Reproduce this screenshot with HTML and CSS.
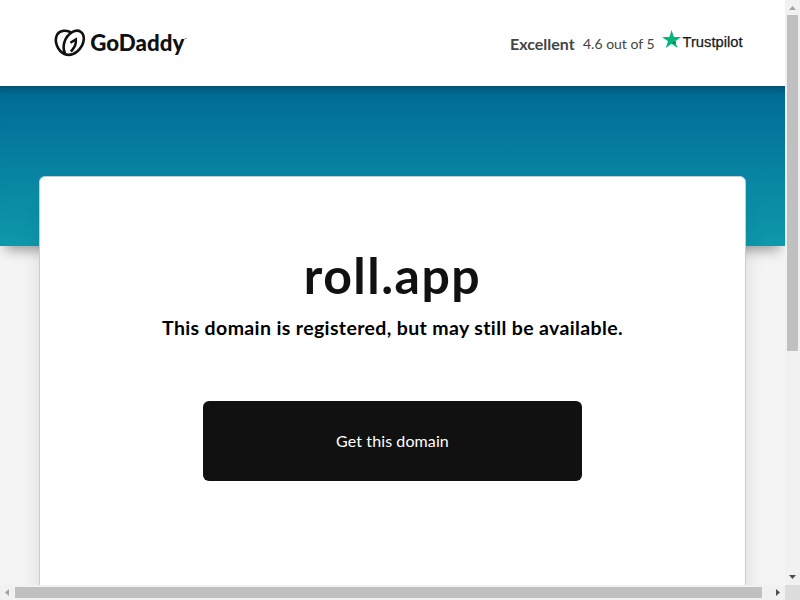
FILE: index.html
```html
<!DOCTYPE html>
<html lang="en">
<head>
  <meta charset="UTF-8">
  <meta name="viewport" content="width=device-width, initial-scale=1.0">
  <title>roll.app</title>
  <link rel="stylesheet" href="styles.css">
</head>
<body>

<div class="window">
  <div class="page">
    <header class="header">
      <svg class="logo" width="136" height="32" viewBox="0 0 136 32">
        <g fill="none" stroke="#111" stroke-width="2.6">
          <path d="M17.4 4.8C13.2 1.7 6.1 1.9 3.2 6.5C-.4 13.2 3.6 22.8 10.4 26C19.2 29.7 29.2 20.4 29.8 11.2C30 3.8 24.5.6 18.1 4.2C10.4 9.1 7.6 18.4 11.2 26"/>
          <path d="M16.4 14.8L21.8 11.4V14.4C21.6 17.4 19.8 20.4 16.9 23.6" stroke-width="2.5"/>
        </g>
        <text class="logo-text" x="36.3" y="23" textLength="94" lengthAdjust="spacingAndGlyphs">GoDaddy</text>
        <text class="logo-tm" x="130.4" y="11.6">™</text>
      </svg>
      <div class="rating">
        <span class="rating-word">Excellent</span>
        <span class="rating-score">4.6 out of 5</span>
        <svg class="trustpilot" width="82" height="24" viewBox="0 0 82 24">
          <path fill="#00b67a" d="M9.6 2L11.9 8.9H19.2L13.3 13.2L15.5 20.1L9.6 15.8L3.8 20.1L6 13.2L.1 8.9H7.4Z"/>
          <path fill="#005128" d="M13.8 14.7L13.3 13.2L9.6 15.8Z"/>
          <text class="trustpilot-text" x="20.5" y="19" textLength="60" lengthAdjust="spacingAndGlyphs">Trustpilot</text>
        </svg>
      </div>
    </header>

    <div class="banner"></div>

    <main class="card">
      <h1>roll.app</h1>
      <h2>This domain is registered, but may still be available.</h2>
      <a class="get-btn" href="#">Get this domain</a>
    </main>
  </div>

  <div class="scroll-y">
    <svg width="15" height="15"><path fill="#a3a3a3" d="M4 10L7.5 6L11 10Z"/></svg>
    <div class="thumb-y"></div>
    <svg class="arrow-end" width="15" height="15"><path fill="#505050" d="M4 5L7.5 9L11 5Z"/></svg>
  </div>
  <div class="scroll-x">
    <svg width="15" height="15"><path fill="#a3a3a3" d="M9 4L5 7.5L9 11Z"/></svg>
    <div class="thumb-x"></div>
    <svg class="arrow-end" width="15" height="15"><path fill="#505050" d="M6 4L10 7.5L6 11Z"/></svg>
  </div>
  <div class="corner"></div>
</div>

</body>
</html>
```

FILE: styles.css
```css
body {
  margin: 0;
  font-family: Lato, sans-serif;
  color: #111;
  overflow: hidden;
}
.window {
  display: grid;
  grid-template-columns: 785px 15px;
  grid-template-rows: 585px 15px;
  width: 800px;
  height: 600px;
}
.page {
  overflow: hidden;
  background: #f4f4f4;
}
.header {
  display: flex;
  justify-content: space-between;
  box-sizing: border-box;
  height: 86px;
  padding: 28px 41px 0 54px;
  background: #fff;
}
.logo-text {
  font-size: 22.5px;
  font-weight: 900;
  fill: #111;
}
.logo-tm {
  font-size: 3px;
  fill: #111;
}
.rating {
  display: flex;
  height: 24px;
  line-height: 31px;
  color: #444;
  white-space: nowrap;
}
.rating-word {
  width: 73px;
  font-size: 16px;
  font-weight: bold;
}
.rating-score {
  width: 79px;
  font-size: 14px;
}
.trustpilot-text {
  font-family: "Liberation Sans", sans-serif;
  font-size: 14px;
  fill: #191919;
  stroke: #191919;
  stroke-width: 0.25px;
}
.banner {
  height: 160px;
  background: linear-gradient(#006a96, #0f98ab);
  box-shadow: inset 0 11px 9px -8px rgba(0,0,0,0.3), 0 10px 12px -6px rgba(0,0,0,0.38);
}
.card {
  display: flex;
  flex-direction: column;
  align-items: center;
  box-sizing: border-box;
  width: 707px;
  height: 700px;
  margin: -70px 0 0 39px;
  padding-top: 68px;
  background: #fff;
  border: 1px solid #c8cccc;
  border-radius: 6px;
  box-shadow: 0 30px 24px -8px rgba(0,0,0,0.2);
}
h1 {
  margin: 0;
  font-size: 50px;
  line-height: 60px;
  letter-spacing: 1.5px;
}
h2 {
  margin: 11px 0 0;
  font-size: 19.5px;
  line-height: 24px;
  letter-spacing: 0.37px;
  color: #000;
}
.get-btn {
  width: 379px;
  height: 80px;
  margin-top: 61px;
  border-radius: 6px;
  background: #111;
  color: #fff;
  font-size: 16px;
  line-height: 80px;
  letter-spacing: 0.1px;
  text-align: center;
  text-decoration: none;
}
.scroll-y, .scroll-x {
  display: flex;
  background: #f1f1f1;
}
.scroll-y {
  flex-direction: column;
}
.thumb-y {
  width: 11px;
  height: 336px;
  margin-left: 2px;
  background: #c0c0c0;
}
.thumb-x {
  width: 747px;
  height: 11px;
  margin-top: 2px;
  background: #c0c0c0;
}
.scroll-y .arrow-end {
  margin-top: auto;
}
.scroll-x .arrow-end {
  margin-left: auto;
}
.corner {
  background: #dcdcdc;
}
```
